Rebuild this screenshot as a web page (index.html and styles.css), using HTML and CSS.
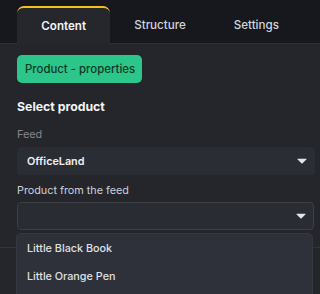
FILE: index.html
```html
<!DOCTYPE html>
<html>
<head>
<meta charset="utf-8">
<link rel="stylesheet" href="styles.css">
</head>
<body>
<div class="page">
<div class="tabs">
  <div class="tab active">Content</div>
  <div class="tab">Structure</div>
  <div class="tab">Settings</div>
</div>
<div class="panel">
  <div class="badge">Product - properties</div>
  <div class="heading">Select product</div>
  <div class="label muted">Feed</div>
  <div class="select filled">
    <span>OfficeLand</span>
    <svg class="caret" width="10" height="6" viewBox="0 0 10 6"><path d="M1 0.8 H9 Q9.8 0.8 9.3 1.5 L5.6 5.3 Q5 5.9 4.4 5.3 L0.7 1.5 Q0.2 0.8 1 0.8 Z" fill="#e4e5e8"/></svg>
  </div>
  <div class="label">Product from the feed</div>
  <div class="select outlined">
    <span></span>
    <svg class="caret" width="10" height="6" viewBox="0 0 10 6"><path d="M1 0.8 H9 Q9.8 0.8 9.3 1.5 L5.6 5.3 Q5 5.9 4.4 5.3 L0.7 1.5 Q0.2 0.8 1 0.8 Z" fill="#e4e5e8"/></svg>
  </div>
  <div class="divider"></div>
  <div class="dropdown">
    <div class="item">Little Black Book</div>
    <div class="item">Little Orange Pen</div>
  </div>
</div>
</div>
</body>
</html>
```
FILE: styles.css
```css
html, body {
  margin: 0;
  padding: 0;
  background: #24262c;
  font-family: Inter, "Noto Sans", sans-serif;
  color: #e8e9ec;
}
.page {
  height: 294px;
  overflow: hidden;
}
.tabs {
  display: flex;
  gap: 3px;
  background: #16181e;
  padding: 6px 17px 0;
  height: 37px;
  border-bottom: 1px solid #2e3037;
}
.tab {
  width: 94px;
  display: flex;
  align-items: center;
  justify-content: center;
  font-size: 11.6px;
  font-weight: 500;
  color: #d3d5da;
}
.tab.active {
  background: #25272d;
  border-top: 2px solid #f2c21b;
  border-radius: 7px 7px 0 0;
  color: #f4f5f7;
  font-weight: 600;
  margin-bottom: -1px;
  height: 36px;
}
.panel {
  position: relative;
  height: 250px;
  box-sizing: border-box;
  padding: 11px 5px 0 17px;
}
.badge {
  display: inline-flex;
  align-items: center;
  height: 28px;
  padding: 0 7px 0 8px;
  background: #2cc58a;
  color: #0d3a26;
  border-radius: 5px;
  font-size: 11.4px;
  font-weight: 500;
}
.heading {
  margin-top: 16px;
  font-size: 12.3px;
  line-height: 16px;
  font-weight: 700;
  color: #f3f4f6;
}
.label {
  font-size: 10.8px;
  line-height: 16px;
  color: #cfd1d6;
  margin-top: 8px;
}
.label.muted {
  margin-top: 12px;
  color: #85878e;
}
.select {
  box-sizing: border-box;
  height: 28px;
  margin-top: 4px;
  border-radius: 4px;
  display: flex;
  align-items: center;
  justify-content: space-between;
  padding: 0 8px 0 10px;
  font-size: 10.8px;
  font-weight: 600;
  color: #f0f1f3;
}
.select.filled {
  background: #2b2d34;
}
.select.outlined {
  border: 1px solid #3d3f47;
  background: #2a2c33;
  margin-top: 3px;
  margin-right: 1px;
  padding-right: 7px;
}
.caret {
  display: block;
}
.divider {
  height: 1px;
  background: #33353c;
  margin: 17px -5px 0 -17px;
}
.dropdown {
  position: absolute;
  left: 16px;
  right: 7px;
  top: 189px;
  height: 80px;
  background: #2f313a;
  border: 1px solid #363841;
  border-radius: 5px;
}
.item {
  height: 28px;
  display: flex;
  align-items: center;
  padding-left: 10px;
  font-size: 10.8px;
  font-weight: 500;
  color: #dfe0e4;
}
```
